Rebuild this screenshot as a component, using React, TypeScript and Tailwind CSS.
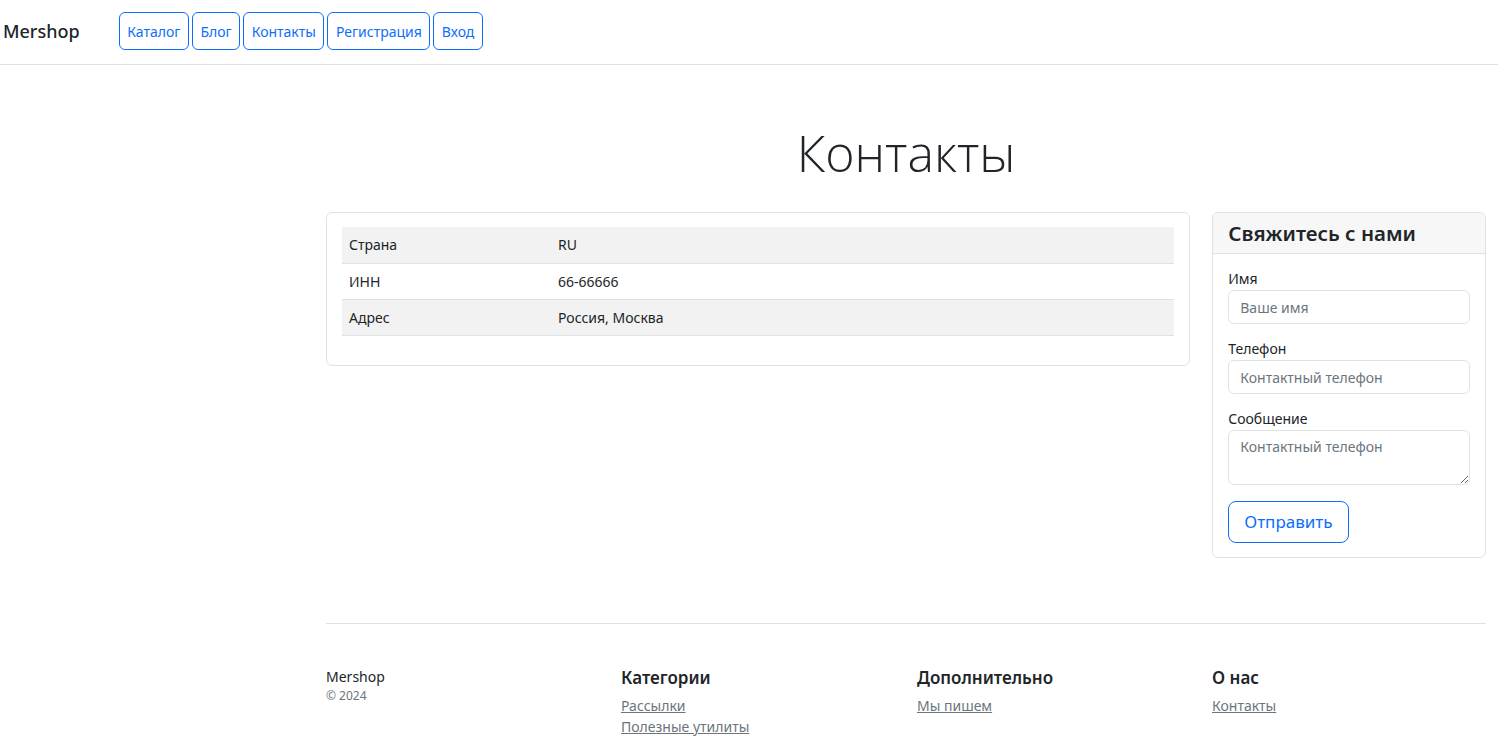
import type { ReactElement } from "react";

const NAV = ["Каталог", "Блог", "Контакты", "Регистрация", "Вход"];

const ROWS: [string, string][] = [
  ["Страна", "RU"],
  ["ИНН", "66-66666"],
  ["Адрес", "Россия, Москва"],
];

const FOOTER = [
  { title: "Категории", links: ["Рассылки", "Полезные утилиты"] },
  { title: "Дополнительно", links: ["Мы пишем"] },
  { title: "О нас", links: ["Контакты"] },
];

function Field({ label, placeholder }: { label: string; placeholder: string }): ReactElement {
  return (
    <div className="flex flex-col">
      <label className="text-[14px] leading-[21px] text-[#212529] mb-[1px]">{label}</label>
      <input
        placeholder={placeholder}
        className="h-[34px] rounded-[6px] border border-[#dee2e6] px-[11px] text-[14px] text-[#212529] placeholder:text-[#6c757d] outline-none"
      />
    </div>
  );
}

export default function App(): ReactElement {
  return (
    <div className="min-h-screen bg-white text-[#212529] font-['Noto_Sans','Open_Sans',sans-serif]">
      <nav className="flex items-center h-[65px] border-b border-[#dee2e6] pl-[3px] pb-[2px]">
        <span className="text-[18px] font-medium mr-[39px]">Mershop</span>
        <div className="flex gap-[3px]">
          {NAV.map((n) => (
            <a
              key={n}
              href="#"
              className="h-[38px] flex items-center px-[7.5px] rounded-[6px] border border-[#0d6efd] text-[14px] text-[#0d6efd]"
            >
              {n}
            </a>
          ))}
        </div>
      </nav>

      <main className="ml-[326px] mr-[12px]">
        <h1 className="text-center font-['Open_Sans',sans-serif] font-light text-[50px] leading-[58px] mt-[59px] mb-[30px]">
          Контакты
        </h1>

        <div className="flex gap-[22px] items-start">
          <section className="w-[865px] rounded-[6px] border border-[#dee2e6] px-[15px] pt-[14px] pb-[29px]">
            <table className="w-full text-[14px] border-collapse">
              <tbody>
                {ROWS.map(([k, v], i) => (
                  <tr key={k} className={`border-b border-[#dee2e6] ${i % 2 === 0 ? "bg-[#f2f2f2]" : "bg-white"}`}>
                    <td className="w-[216px] h-[36px] px-[7px]">{k}</td>
                    <td className="px-0">{v}</td>
                  </tr>
                ))}
              </tbody>
            </table>
          </section>

          <section className="w-[274px] rounded-[6px] border border-[#dee2e6]">
            <div className="h-[41px] bg-[#f7f7f7] border-b border-[#dee2e6] rounded-t-[6px] px-[15px] flex items-center">
              <h2 className="text-[20.5px] font-semibold">Свяжитесь с нами</h2>
            </div>
            <div className="px-[15px] pt-[14px] pb-[14px] flex flex-col gap-[14px]">
              <Field label="Имя" placeholder="Ваше имя" />
              <Field label="Телефон" placeholder="Контактный телефон" />
              <div className="flex flex-col">
                <label className="text-[14px] leading-[21px] mb-[1px]">Сообщение</label>
                <textarea
                  placeholder="Контактный телефон"
                  className="h-[55px] rounded-[6px] border border-[#dee2e6] px-[11px] py-[5px] text-[14px] placeholder:text-[#6c757d] outline-none"
                />
              </div>
              <button
                type="button"
                className="self-start mt-[2px] h-[42px] px-[15px] rounded-[8px] border border-[#0d6efd] text-[17px] text-[#0d6efd]"
              >
                Отправить
              </button>
            </div>
          </section>
        </div>

        <footer className="mt-[65px] border-t border-[#dee2e6] pt-[42px] grid grid-cols-[295px_296px_295px_1fr] pb-[6px]">
          <div>
            <p className="text-[14px] leading-[20px] mt-[1px]">Mershop</p>
            <p className="text-[12px] text-[#6c757d] leading-[18px]">© 2024</p>
          </div>
          {FOOTER.map((c) => (
            <div key={c.title}>
              <h5 className="text-[17px] font-semibold leading-[24px] mb-[5px]">{c.title}</h5>
              {c.links.map((l) => (
                <a key={l} href="#" className="block text-[14px] leading-[21px] text-[#6c757d] underline">
                  {l}
                </a>
              ))}
            </div>
          ))}
        </footer>
      </main>
    </div>
  );
}
